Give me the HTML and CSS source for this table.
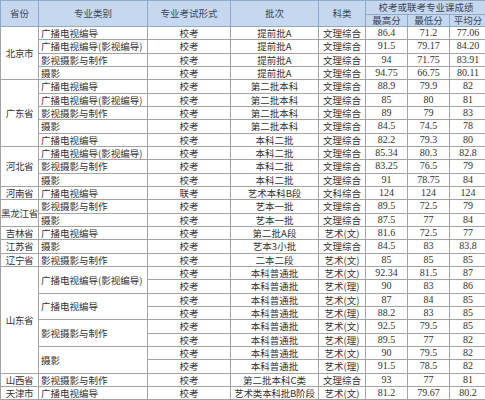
FILE: index.html
```html
<!DOCTYPE html>
<html lang="zh-CN">
<head>
<meta charset="utf-8">
<title>专业课成绩</title>
<link rel="stylesheet" href="styles.css">
</head>
<body>
<table class="score">
  <colgroup>
    <col class="c-prov"><col class="c-major"><col class="c-form"><col class="c-batch"><col class="c-type"><col class="c-num"><col class="c-num"><col class="c-num3">
  </colgroup>
  <thead>
    <tr class="h1">
      <th rowspan="2">省份</th>
      <th rowspan="2">专业类别</th>
      <th rowspan="2">专业考试形式</th>
      <th rowspan="2">批次</th>
      <th rowspan="2">科类</th>
      <th colspan="3">校考或联考专业课成绩</th>
    </tr>
    <tr class="h2">
      <th>最高分</th><th>最低分</th><th>平均分</th>
    </tr>
  </thead>
  <tbody>
    <tr><td class="prov" rowspan="4">北京市</td><td class="major">广播电视编导</td><td>校考</td><td>提前批A</td><td>文理综合</td><td class="n">86.4</td><td class="n">71.2</td><td class="n">77.06</td></tr>
    <tr><td class="major">广播电视编导(影视编导)</td><td>校考</td><td>提前批A</td><td>文理综合</td><td class="n">91.5</td><td class="n">79.17</td><td class="n">84.20</td></tr>
    <tr><td class="major">影视摄影与制作</td><td>校考</td><td>提前批A</td><td>文理综合</td><td class="n">94</td><td class="n">71.75</td><td class="n">83.91</td></tr>
    <tr><td class="major">摄影</td><td>校考</td><td>提前批A</td><td>文理综合</td><td class="n">94.75</td><td class="n">66.75</td><td class="n">80.11</td></tr>

    <tr><td class="prov" rowspan="5">广东省</td><td class="major">广播电视编导</td><td>校考</td><td>第二批本科</td><td>文理综合</td><td class="n">88.9</td><td class="n">79.9</td><td class="n">82</td></tr>
    <tr><td class="major">广播电视编导(影视编导)</td><td>校考</td><td>第二批本科</td><td>文理综合</td><td class="n">85</td><td class="n">80</td><td class="n">81</td></tr>
    <tr><td class="major">影视摄影与制作</td><td>校考</td><td>第二批本科</td><td>文理综合</td><td class="n">89</td><td class="n">79</td><td class="n">83</td></tr>
    <tr><td class="major">摄影</td><td>校考</td><td>第二批本科</td><td>文理综合</td><td class="n">84.5</td><td class="n">74.5</td><td class="n">78</td></tr>
    <tr><td class="major">广播电视编导</td><td>校考</td><td>本科二批</td><td>文理综合</td><td class="n">82.2</td><td class="n">79.3</td><td class="n">80</td></tr>

    <tr><td class="prov" rowspan="3">河北省</td><td class="major">广播电视编导(影视编导)</td><td>校考</td><td>本科二批</td><td>文理综合</td><td class="n">85.34</td><td class="n">80.3</td><td class="n">82.8</td></tr>
    <tr><td class="major">影视摄影与制作</td><td>校考</td><td>本科二批</td><td>文理综合</td><td class="n">83.25</td><td class="n">76.5</td><td class="n">79</td></tr>
    <tr><td class="major">摄影</td><td>校考</td><td>本科二批</td><td>文理综合</td><td class="n">91</td><td class="n">78.75</td><td class="n">84</td></tr>

    <tr><td class="prov">河南省</td><td class="major">广播电视编导</td><td>联考</td><td>艺术本科B段</td><td>文科综合</td><td class="n">124</td><td class="n">124</td><td class="n">124</td></tr>

    <tr><td class="prov" rowspan="2">黑龙江省</td><td class="major">影视摄影与制作</td><td>校考</td><td>艺本一批</td><td>文理综合</td><td class="n">89.5</td><td class="n">72.5</td><td class="n">79</td></tr>
    <tr><td class="major">摄影</td><td>校考</td><td>艺本一批</td><td>文理综合</td><td class="n">87.5</td><td class="n">77</td><td class="n">84</td></tr>

    <tr><td class="prov">吉林省</td><td class="major">广播电视编导</td><td>校考</td><td>第二批A段</td><td>艺术(文)</td><td class="n">81.6</td><td class="n">72.5</td><td class="n">77</td></tr>
    <tr><td class="prov">江苏省</td><td class="major">摄影</td><td>校考</td><td>艺本3小批</td><td>文理综合</td><td class="n">84.5</td><td class="n">83</td><td class="n">83.8</td></tr>
    <tr><td class="prov">辽宁省</td><td class="major">影视摄影与制作</td><td>校考</td><td>二本二段</td><td>艺术(文)</td><td class="n">85</td><td class="n">85</td><td class="n">85</td></tr>

    <tr><td class="prov" rowspan="8">山东省</td><td class="major" rowspan="2">广播电视编导(影视编导)</td><td>校考</td><td>本科普通批</td><td>艺术(文)</td><td class="n">92.34</td><td class="n">81.5</td><td class="n">87</td></tr>
    <tr><td>校考</td><td>本科普通批</td><td>艺术(理)</td><td class="n">90</td><td class="n">83</td><td class="n">86</td></tr>
    <tr><td class="major" rowspan="2">广播电视编导</td><td>校考</td><td>本科普通批</td><td>艺术(文)</td><td class="n">87</td><td class="n">84</td><td class="n">85</td></tr>
    <tr><td>校考</td><td>本科普通批</td><td>艺术(理)</td><td class="n">88.2</td><td class="n">83</td><td class="n">85</td></tr>
    <tr><td class="major" rowspan="2">影视摄影与制作</td><td>校考</td><td>本科普通批</td><td>艺术(文)</td><td class="n">92.5</td><td class="n">79.5</td><td class="n">85</td></tr>
    <tr><td>校考</td><td>本科普通批</td><td>艺术(理)</td><td class="n">89.5</td><td class="n">77</td><td class="n">82</td></tr>
    <tr><td class="major" rowspan="2">摄影</td><td>校考</td><td>本科普通批</td><td>艺术(文)</td><td class="n">90</td><td class="n">79.5</td><td class="n">82</td></tr>
    <tr><td>校考</td><td>本科普通批</td><td>艺术(理)</td><td class="n">91.5</td><td class="n">78.5</td><td class="n">82</td></tr>

    <tr><td class="prov">山西省</td><td class="major">影视摄影与制作</td><td>校考</td><td>第二批本科C类</td><td>文理综合</td><td class="n">93</td><td class="n">77</td><td class="n">81</td></tr>
    <tr><td class="prov">天津市</td><td class="major">广播电视编导</td><td>校考</td><td class="wide">艺术类本科批B阶段</td><td>艺术(文)</td><td class="n">81.2</td><td class="n">79.67</td><td class="n">80.2</td></tr>
  </tbody>
</table>
</body>
</html>
```
FILE: styles.css
```css
html, body {
  margin: 0;
  padding: 0;
  background: #ffffff;
}

.score {
  width: 486px;
  table-layout: fixed;
  border-collapse: collapse;
  font-family: "Noto Sans CJK SC", "Noto Sans", sans-serif;
  font-size: 9.5px;
  color: #333333;
}

.c-prov { width: 38px; }
.c-major { width: 109px; }
.c-form { width: 83px; }
.c-batch { width: 88px; }
.c-type { width: 47px; }
.c-num { width: 42px; }
.c-num3 { width: 37px; }

.score th {
  background: #c6d8ef;
  color: #3b4656;
  font-weight: normal;
  border: 1px solid #8fa9c9;
  padding: 0;
  line-height: 11px;
  white-space: nowrap;
  overflow: hidden;
}

.score thead .h1 { height: 14px; }
.score thead .h2 { height: 12px; }

.score td {
  border: 1px solid #a3a3a3;
  padding: 0;
  height: 12.33px;
  line-height: 12px;
  text-align: center;
  white-space: nowrap;
  overflow: hidden;
}

.score td.major {
  text-align: left;
  padding-left: 2px;
}

.score td.prov {
  overflow: visible;
  letter-spacing: -0.3px;
}

.score td.wide {
  overflow: visible;
  letter-spacing: -0.2px;
}

.score td.n {
  font-family: "Liberation Serif", "Times New Roman", serif;
  font-size: 10px;
}
```
